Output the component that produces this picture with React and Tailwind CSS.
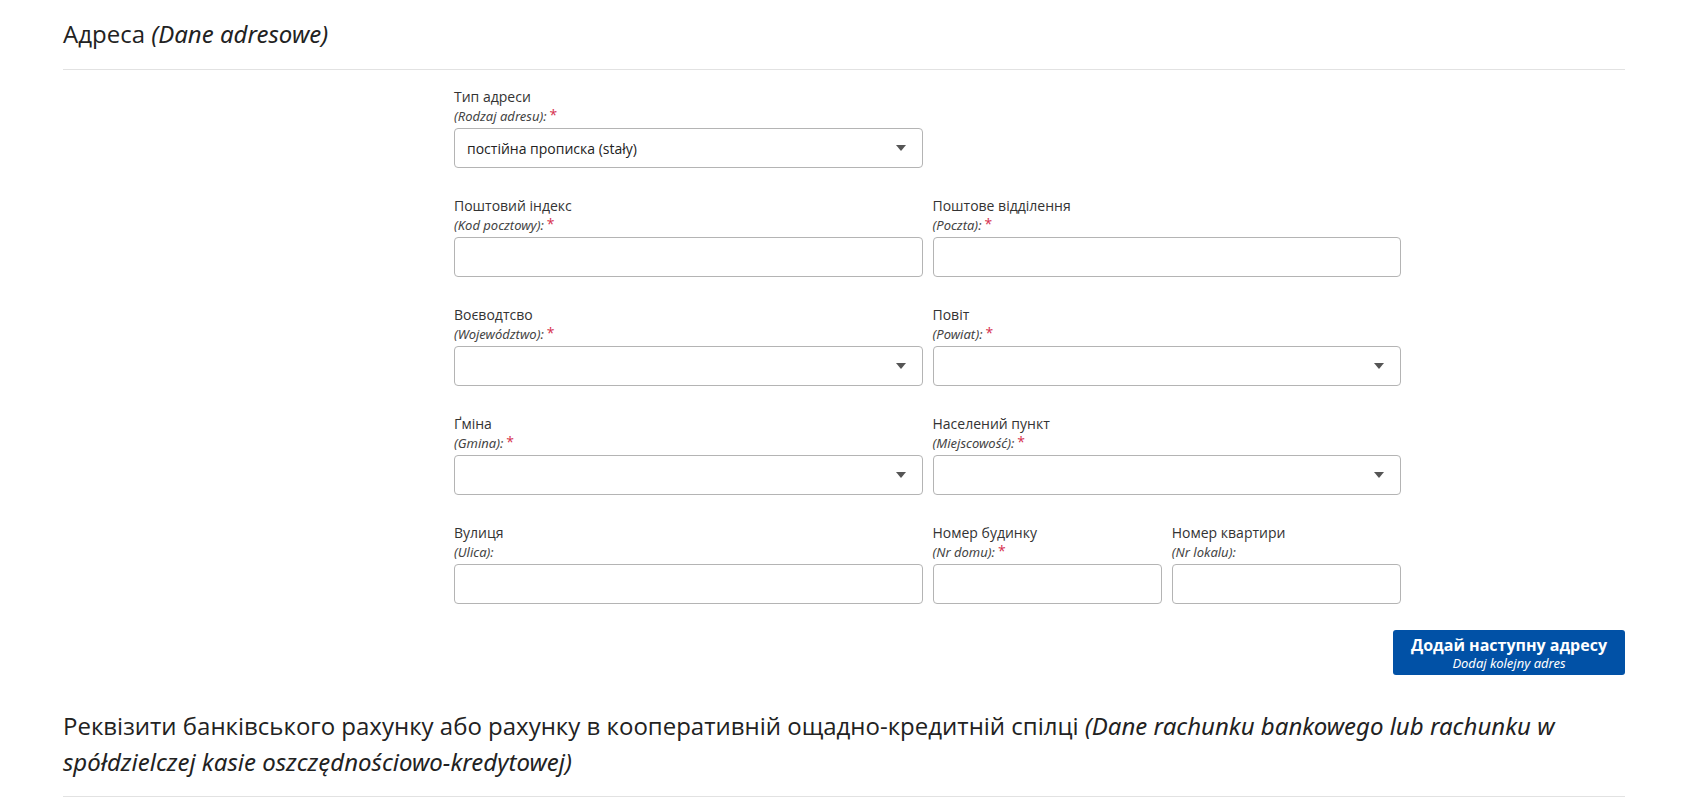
function Label({ ua, pl, required }) {
  return (
    <div>
      <div className="text-[14px] leading-[20px] text-[#333]">{ua}</div>
      <div className="h-[18px] text-[13px] leading-[18px] italic font-['Noto_Sans',sans-serif] text-[#444]">
        ({pl}):
        {required && (
          <span className="relative top-[-1px] ml-[3px] font-['Open_Sans',sans-serif] text-[14px] leading-none not-italic text-[#d6304e]">
            *
          </span>
        )}
      </div>
    </div>
  );
}

function TextField({ ua, pl, required }) {
  return (
    <div>
      <Label ua={ua} pl={pl} required={required} />
      <input
        type="text"
        className="mt-[3px] block h-[40px] w-full rounded-[4px] border border-[#b4b4b4] bg-white px-3 text-[14px] text-[#333] outline-none"
      />
    </div>
  );
}

function SelectField({ ua, pl, required, value }) {
  return (
    <div>
      <Label ua={ua} pl={pl} required={required} />
      <div className="mt-[3px] flex h-[40px] w-full items-center justify-between rounded-[4px] border border-[#b4b4b4] bg-white pl-3 pr-[16px]">
        <span className="text-[14px] text-[#222]">{value}</span>
        <svg width="10" height="6" viewBox="0 0 10 6">
          <path d="M0 0 L10 0 L5 6 Z" fill="#555" />
        </svg>
      </div>
    </div>
  );
}

export default function App() {
  return (
    <div className="min-h-screen bg-white px-[63px] font-['Open_Sans',sans-serif] text-[#222]">
      <h2 className="border-b border-[#e2e2e2] pt-[16px] pb-[17px] text-[24px] leading-[36px]">
        Адреса <i className="font-['Noto_Sans',sans-serif]">(Dane adresowe)</i>
      </h2>

      <div className="ml-[391px] w-[947px] pt-[17px]">
        <div className="grid grid-cols-2 gap-x-[10px] gap-y-[28px]">
          <SelectField ua="Тип адреси" pl="Rodzaj adresu" required value="постійна прописка (stały)" />
          <div />
          <TextField ua="Поштовий індекс" pl="Kod pocztowy" required />
          <TextField ua="Поштове відділення" pl="Poczta" required />
          <SelectField ua="Воєводтсво" pl="Województwo" required />
          <SelectField ua="Повіт" pl="Powiat" required />
          <SelectField ua="Ґміна" pl="Gmina" required />
          <SelectField ua="Населений пункт" pl="Miejscowość" required />
          <TextField ua="Вулиця" pl="Ulica" />
          <div className="grid grid-cols-2 gap-x-[10px]">
            <TextField ua="Номер будинку" pl="Nr domu" required />
            <TextField ua="Номер квартири" pl="Nr lokalu" />
          </div>
        </div>
      </div>

      <div className="mt-[26px] flex justify-end">
        <button className="flex h-[45px] w-[232px] flex-col items-center justify-center rounded-[3px] bg-[#0151a6] text-white">
          <span className="text-[16px] font-bold leading-[20px]">Додай наступну адресу</span>
          <span className="font-['Noto_Sans',sans-serif] text-[13px] italic leading-[16px]">Dodaj kolejny adres</span>
        </button>
      </div>

      <h2 className="mt-[33px] border-b border-[#e2e2e2] pb-[16px] text-[24px] leading-[36px]">
        Реквізити банківського рахунку або рахунку в кооперативній ощадно-кредитній спілці{" "}
        <i className="font-['Noto_Sans',sans-serif]">
          (Dane rachunku bankowego lub rachunku w<br />
          spółdzielczej kasie oszczędnościowo-kredytowej)
        </i>
      </h2>
    </div>
  );
}
